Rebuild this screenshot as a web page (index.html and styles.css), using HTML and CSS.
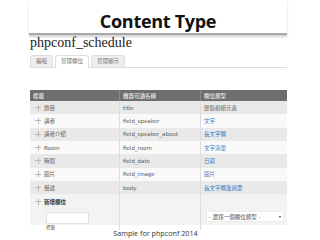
FILE: index.html
```html
<!DOCTYPE html>
<html lang="zh-Hant">
<head>
<meta charset="utf-8">
<link rel="stylesheet" href="styles.css">
</head>
<body>
<div class="slide">
  <h1 class="title">Content Type</h1>
  <div class="page">
    <div class="site-name">phpconf_schedule</div>
    <ul class="tabs">
      <li class="tab">編輯</li>
      <li class="tab active">管理欄位</li>
      <li class="tab">管理顯示</li>
    </ul>
    <div class="fields">
      <div class="row head">
        <div class="cell">標籤</div>
        <div class="cell">機器可讀名稱</div>
        <div class="cell">欄位類型</div>
      </div>
      <div class="row odd">
        <div class="cell"><span class="drag"></span>題目</div>
        <div class="cell">title</div>
        <div class="cell plain">節點模組元素</div>
      </div>
      <div class="row even">
        <div class="cell"><span class="drag"></span>講者</div>
        <div class="cell">field_speaker</div>
        <div class="cell link">文字</div>
      </div>
      <div class="row odd">
        <div class="cell"><span class="drag"></span>講者介紹</div>
        <div class="cell">field_speaker_about</div>
        <div class="cell link">長文字欄</div>
      </div>
      <div class="row even">
        <div class="cell"><span class="drag"></span>Room</div>
        <div class="cell">field_room</div>
        <div class="cell link">文字清單</div>
      </div>
      <div class="row odd">
        <div class="cell"><span class="drag"></span>時間</div>
        <div class="cell">field_date</div>
        <div class="cell link">日期</div>
      </div>
      <div class="row even">
        <div class="cell"><span class="drag"></span>圖片</div>
        <div class="cell">field_image</div>
        <div class="cell link">圖片</div>
      </div>
      <div class="row odd">
        <div class="cell"><span class="drag"></span>描述</div>
        <div class="cell">body</div>
        <div class="cell link">長文字欄及摘要</div>
      </div>
      <div class="row add">
        <div class="cell stack">
          <div class="add-label"><span class="drag"></span>新增欄位</div>
          <div class="input"></div>
          <div class="sub-label">標籤</div>
        </div>
        <div class="cell"></div>
        <div class="cell bottom">
          <div class="select"><span>- 選擇一個欄位類型 -</span><span class="arrow"></span></div>
        </div>
      </div>
    </div>
  </div>
  <div class="footer">Sample for phpconf 2014</div>
</div>
</body>
</html>
```
FILE: styles.css
```css
* { box-sizing: border-box; }
html, body { margin: 0; padding: 0; background: #fff; }
body { width: 320px; height: 240px; overflow: hidden; }

.slide { width: 320px; height: 240px; padding: 0 33px 0 29px; }

.title {
  margin: 0;
  padding-top: 7.5px;
  height: 35px;
  font-family: "Open Sans", sans-serif;
  font-weight: 700;
  font-size: 18px;
  letter-spacing: -0.3px;
  line-height: 27px;
  text-align: center;
  color: #111;
  border-bottom: 2px solid #a9a9a9;
  box-shadow: 0 2px 2px rgba(0, 0, 0, 0.18);
}

.page { padding-left: 1px; }

.site-name {
  font-family: "Liberation Serif", serif;
  font-size: 14px;
  line-height: 16px;
  color: #222;
}

.tabs {
  list-style: none;
  margin: 4px 0 0;
  padding: 0;
  display: flex;
  gap: 2px;
  height: 13px;
  border-bottom: 1px solid #dcdcdc;
}
.tab {
  padding: 0 5px;
  height: 12px;
  line-height: 11px;
  font-family: "Noto Sans CJK TC", sans-serif;
  font-size: 5.5px;
  color: #777;
  background: #eeeeee;
  border: 1px solid #dedede;
  border-bottom: none;
  border-radius: 3px 3px 0 0;
}
.tab.active { background: #fff; height: 13px; }

.fields {
  margin-top: 22px;
  width: 257px;
  font-family: "DejaVu Sans", "Noto Sans CJK TC", sans-serif;
  font-size: 5.5px;
  color: #5a5a5a;
}
.row {
  display: grid;
  grid-template-columns: 89px 81px 87px;
  height: 13.33px;
}
.row.head { height: 11px; background: #6e6e6e; color: #fff; }
.row.odd { background: #e9e9e9; }
.row.even { background: #f9f9f9; }
.row.add { height: 31px; background: #f3f3f3; }

.cell {
  display: flex;
  align-items: center;
  padding-left: 3px;
  border-left: 1px solid #dddddd;
  white-space: nowrap;
  overflow: hidden;
}
.cell:first-child { border-left: none; padding-left: 5px; }
.head .cell { border-left-color: #8a8a8a; padding-left: 3px; }
.head .cell:first-child { padding-left: 3px; }

.drag {
  width: 6px;
  height: 6px;
  margin-right: 3px;
  position: relative;
  flex: none;
}
.drag::before, .drag::after {
  content: "";
  position: absolute;
  background: #b8b8b8;
}
.drag::before { left: 2.5px; top: 0; width: 1px; height: 6px; }
.drag::after { top: 2.5px; left: 0; width: 6px; height: 1px; }

.plain { color: #666; }
.link { color: #3a7bc8; }

.stack { flex-direction: column; align-items: flex-start; padding-top: 4px; overflow: visible; }
.add-label { display: flex; align-items: center; height: 7px; color: #333; font-weight: 700; }
.input {
  margin: 7px 0 0 11px;
  width: 43px;
  height: 12px;
  background: #fff;
  border: 1px solid #e0e0e0;
  flex: none;
}
.sub-label { margin: 1px 0 0 11px; font-size: 4.5px; line-height: 5px; color: #666; }

.bottom { align-items: flex-start; padding-top: 16.7px; padding-left: 5px; }
.select {
  width: 78px;
  height: 11.5px;
  background: #fff;
  border: 1px solid #ececec;
  display: flex;
  align-items: center;
  justify-content: space-between;
  padding: 0 2px;
  color: #555;
}
.arrow {
  width: 0; height: 0;
  border-left: 1.5px solid transparent;
  border-right: 1.5px solid transparent;
  border-top: 2px solid #333;
}

.footer {
  margin-top: 4px;
  padding-right: 5px;
  font-family: "Open Sans", sans-serif;
  font-size: 7.2px;
  line-height: 9px;
  text-align: center;
  color: #333;
}
```
